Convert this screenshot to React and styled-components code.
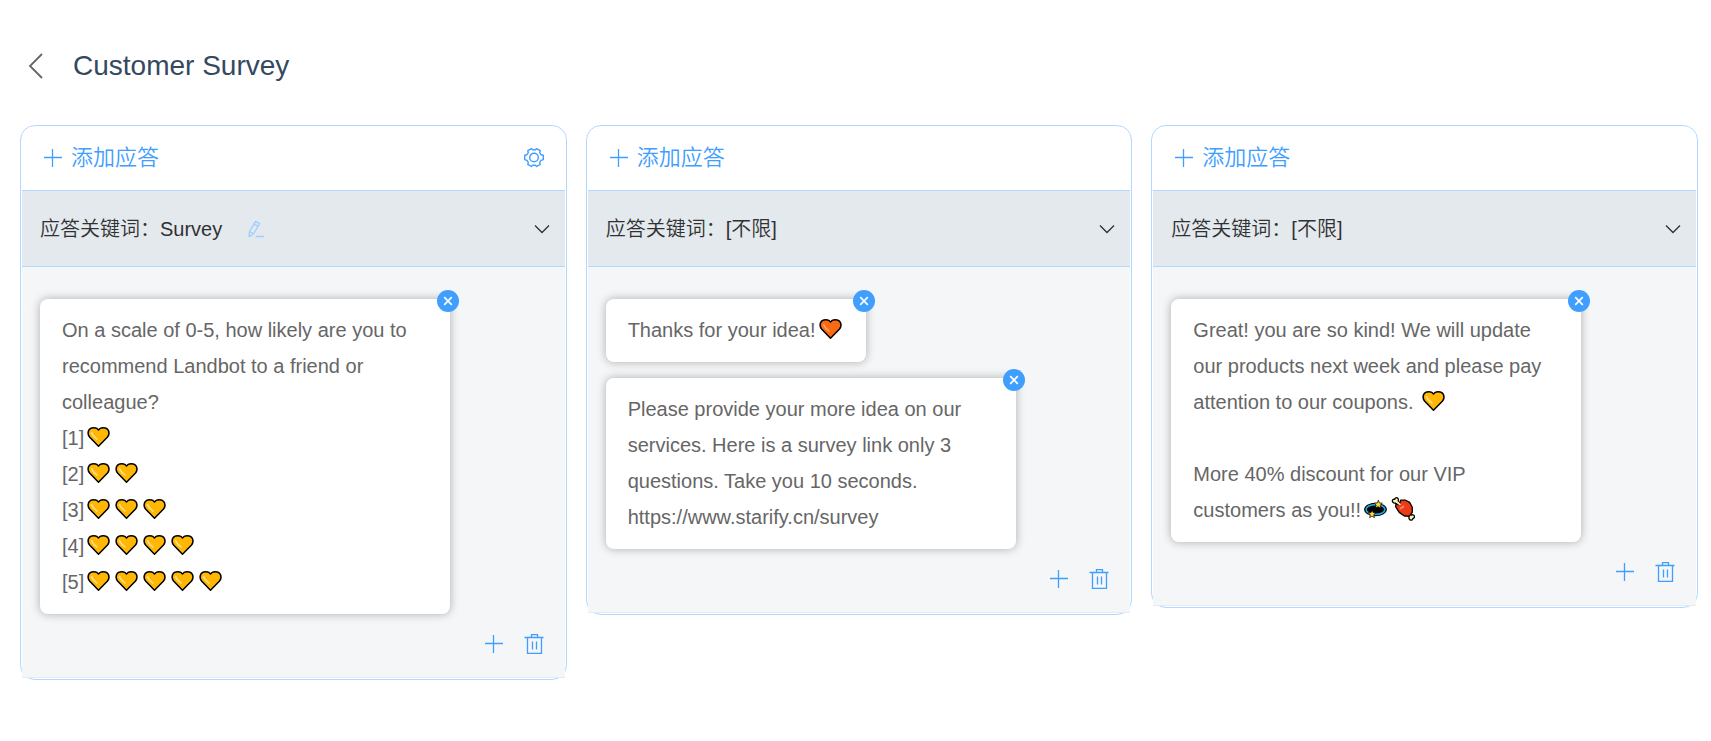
import React from 'react';

import styled, { createGlobalStyle } from 'styled-components';

const colors = {
    blue: '#409eff',
    paleBlue: '#a0cfff',
    line: '#b3d8ff',
    title: '#34495e',
    dark: '#303133',
    text: '#666',
    row: '#e4e9ed',
    body: '#f5f6f8',
    white: '#fff',
};

const GlobalStyle = createGlobalStyle`
  * {
    box-sizing: border-box;
  }
  body {
    margin: 0;
    background-color: ${colors.white};
    font-family: "Liberation Sans", Arial, "Noto Sans CJK SC", sans-serif;
    font-size: 20px;
    color: ${colors.text};
  }
`;

const Root = styled.main`
  padding: 41px 13px 40px 20px;
`;

const PageHeader = styled.header`
  display: flex;
  align-items: center;
  gap: 21px;
  height: 50px;
  margin-bottom: 34px;
`;

const PageTitle = styled.h1`
  margin: 0;
  font-size: 28px;
  font-weight: 400;
  line-height: 36px;
  color: ${colors.title};
`;

const IconButton = styled.button`
  display: flex;
  align-items: center;
  justify-content: center;
  flex: none;
  width: ${({ $width }) => $width || 20}px;
  height: 32px;
  padding: 0;
  border: none;
  background: none;
  color: ${({ $color }) => $color || colors.blue};
  cursor: pointer;
  svg {
    flex: none;
  }
`;

const Columns = styled.div`
  display: grid;
  grid-template-columns: repeat(3, minmax(0, 1fr));
  align-items: start;
  gap: 19px;
`;

const Panel = styled.section`
  padding: 0 1px 1px;
  border: 1px solid ${colors.line};
  border-radius: 15px;
`;

const PanelHeader = styled.div`
  display: flex;
  align-items: center;
  justify-content: space-between;
  height: 65px;
  padding: 0 21px 0 22px;
  border-bottom: 1px solid ${colors.line};
`;

const AddButton = styled.button`
  display: flex;
  align-items: center;
  gap: 9px;
  padding: 0;
  border: none;
  background: none;
  font-family: inherit;
  font-size: 22px;
  font-weight: 350;
  line-height: 32px;
  color: ${colors.blue};
  cursor: pointer;
`;

const KeywordRow = styled.div`
  display: flex;
  align-items: center;
  height: 76px;
  padding: 0 13px 0 18px;
  border-bottom: 1px solid ${colors.line};
  background-color: ${colors.row};
  color: ${colors.dark};
`;

const Keyword = styled.h2`
  margin: 0 24px 0 0;
  font-size: 20px;
  font-weight: 350;
  line-height: 32px;
`;

const Spacer = styled.div`
  flex: 1;
`;

const PanelBody = styled.div`
  padding: 32px 21px 3px 18px;
  border-bottom: 1px solid #e6ebf2;
  background-color: ${colors.body};
`;

const Messages = styled.div`
  display: flex;
  flex-direction: column;
  align-items: flex-start;
  gap: 16px;
`;

const Bubble = styled.article`
  position: relative;
  max-width: 410px;
  padding: 13px 22px 14px;
  border-radius: 8px;
  background-color: ${colors.white};
  box-shadow: 0 0 10px rgba(0, 0, 0, 0.3);
`;

const BubbleText = styled.p`
  margin: 0;
  line-height: 36px;
  white-space: pre-wrap;
`;

const CloseButton = styled.button`
  position: absolute;
  top: -9px;
  right: -9px;
  display: flex;
  align-items: center;
  justify-content: center;
  width: 22px;
  height: 22px;
  padding: 0;
  border: none;
  border-radius: 50%;
  background-color: ${colors.blue};
  color: ${colors.white};
  cursor: pointer;
`;

const Actions = styled.div`
  display: flex;
  align-items: center;
  justify-content: flex-end;
  gap: 20px;
  height: 60px;
`;

const EmojiSvg = styled.svg`
  width: 24px;
  height: 24px;
  margin: 0 2px;
  vertical-align: text-bottom;
`;

const Icon = ({ size = 20, stroke = 1.4, children }) => (
    <svg
        width={size}
        height={size}
        viewBox="0 0 20 20"
        fill="none"
        stroke="currentColor"
        strokeWidth={stroke}
        aria-hidden="true"
    >
        {children}
    </svg>
);

const BackIcon = () => (
    <svg width="16" height="26" viewBox="0 0 16 26" fill="none" stroke="currentColor" strokeWidth="1.8" aria-hidden="true">
        <path d="M14 1 2 13 14 25" />
    </svg>
);

const PlusIcon = () => (
    <svg width="18" height="18" viewBox="0 0 18 18" fill="none" stroke="currentColor" strokeWidth="1.3" aria-hidden="true">
        <path d="M8.5 0v18M0 8.5h18" />
    </svg>
);

const ArrowDownIcon = () => (
    <Icon stroke={1.3}>
        <path d="M3 6.5 10 13.5 17 6.5" />
    </Icon>
);

const GearIcon = () => (
    <Icon>
        <circle cx="10" cy="9.5" r="4.3" />
        <path
            strokeLinejoin="round"
            d="M7.4.6 8.6 1.8h2.8L12.6.6 16.2 2.7 15.7 4.5 17 6.7 19.3 7.3v4.4l-2.3.7-1.3 2.2.5 1.8-3.6 2.1-1.2-1.3H8.6l-1.2 1.3L3.8 16.4l.5-1.8L3 12.4.7 11.7V7.3L3 6.7 4.3 4.5 3.8 2.7Z"
        />
    </Icon>
);

const EditIcon = () => (
    <Icon size={18} stroke={1.5}>
        <path
            strokeLinejoin="round"
            d="M9.6 1.6 14 4.1 7.3 15.3 2.4 18.4 2.7 12.8ZM7.8 4.5 12.3 7.1M2.7 12.8 7.3 15.3M9.5 18.3H19"
        />
    </Icon>
);

const TrashIcon = () => (
    <Icon stroke={1.3}>
        <path d="M.5 3.5h19M3.5 3.5v16h14v-16M7.5 3.5v-3h6v3M8.5 7.5v8M12.5 7.5v8" />
    </Icon>
);

const CloseIcon = () => (
    <svg width="10" height="10" viewBox="0 0 10 10" fill="none" stroke="currentColor" strokeWidth="1.7" aria-hidden="true">
        <path d="M1.2 1.2 8.8 8.8M8.8 1.2 1.2 8.8" />
    </svg>
);

const Heart = ({ fill, shine, label }) => (
    <EmojiSvg viewBox="0 0 24 24" role="img" aria-label={label}>
        <path
            fill={fill}
            stroke="#000"
            strokeWidth="1.5"
            strokeLinejoin="round"
            d="M12.5 5 10.7 3.3C9.4 2.5 6.2 2.4 4.6 3.4 2.7 4.6 2 6.4 2.1 8.4c.1 1.5.6 2.7 1.7 3.9l8.7 8.9 8.8-8.9c1.1-1.2 1.6-2.4 1.7-3.9.1-2-.7-3.8-2.6-5-1.6-1-4.8-.9-6.1-.1Z"
        />
        <path fill="none" stroke={shine} strokeWidth="1.6" strokeLinecap="round" d="M5.8 7.6C5.9 9.7 8.8 12.2 11 14" />
    </EmojiSvg>
);

const Dizzy = () => (
    <EmojiSvg viewBox="0 0 24 24" role="img" aria-label="dizzy">
        <ellipse cx="12.5" cy="12.5" rx="11.4" ry="6.8" fill="#000" />
        <ellipse cx="12.5" cy="12.5" rx="9.4" ry="4.9" fill="none" stroke="#1fa8e0" strokeWidth="1.6" />
        <path
            fill="#ffd83b"
            stroke="#000"
            strokeWidth=".7"
            d="m15.4 3.2 1 2.8 3 .2-2.2 2 .7 3-2.7-1.5-2.7 1.3.7-2.9-2-1.9 3-.2ZM9.2 12.9l.9 2.6 2.8.2-2.1 1.8.6 3.2-2.4-1.6-2.4 1.6.7-3-2.1-2 2.9-.2Z"
        />
    </EmojiSvg>
);

const Meat = () => (
    <EmojiSvg viewBox="0 0 24 24" role="img" aria-label="meat on bone">
        <path
            fill="#ffefb0"
            stroke="#000"
            strokeWidth="1.3"
            strokeLinejoin="round"
            d="M7 8.2 4.7 6.2C2.6 6.3 1 5 1.4 3.4 1.8 2.3 2.9 2 3.7 2.3 4 .8 5.5.3 6.6 1.1 7.6 1.9 7.5 3.2 7 4.2l2.2 2.4ZM16 18l2.1 1.5c-.5 1.8.2 3.3 1.6 3.6 1.3.3 2.2-.6 2.2-1.7 1.3-.2 2-1.3 1.5-2.4-.6-1.3-2.1-1.5-3.3-.9L18.3 16Z"
        />
        <path
            fill="#ee3a17"
            stroke="#000"
            strokeWidth="1.3"
            strokeLinejoin="round"
            d="M9.6 3.2 14.6 3.2 18.6 5.4 21.2 10 21.4 15.2 18.2 19.2 13.4 19 8.2 15.4 4.6 9.6 5 6.8 8.2 7.8Z"
        />
        <path
            fill="#ffefb0"
            d="M5.2 5.2 6.4 4 10.2 7.6 8.4 8.2Z"
        />
        <path fill="none" stroke="#f7856a" strokeWidth="2" strokeLinecap="round" d="M9.5 11.5 12.5 9.5" />
    </EmojiSvg>
);

const emojis = {
    ':yellow:': <Heart fill="#ffb703" shine="#ffdf8c" label="yellow heart" />,
    ':orange:': <Heart fill="#fa6a12" shine="#ffa36b" label="orange heart" />,
    ':dizzy:': <Dizzy />,
    ':meat:': <Meat />,
};

const renderText = text => text.split(/(:[a-z]+:)/).map((part, i) => (
    <React.Fragment key={i}>{emojis[part] || part}</React.Fragment>
));

const scale = [1, 2, 3, 4, 5].map(n => `[${n}]${':yellow:'.repeat(n)}`).join('\n');

const columns = [
    {
        id: 'survey',
        keyword: 'Survey',
        editable: true,
        messages: [
            `On a scale of 0-5, how likely are you to recommend Landbot to a friend or colleague?\n${scale}`,
        ],
    },
    {
        id: 'idea',
        keyword: '[不限]',
        messages: [
            'Thanks for your idea!:orange:',
            'Please provide your more idea on our services. Here is a survey link only 3 questions. Take you 10 seconds.\nhttps://www.starify.cn/survey',
        ],
    },
    {
        id: 'coupon',
        keyword: '[不限]',
        messages: [
            'Great! you are so kind! We will update our products next week and please pay attention to our coupons. :yellow:\n\nMore 40% discount for our VIP customers as you!!:dizzy::meat:',
        ],
    },
];

const Column = ({ keyword, editable, messages }) => (
    <Panel>
        <PanelHeader>
            <AddButton type="button">
                <PlusIcon />
                添加应答
            </AddButton>
            {editable && (
                <IconButton type="button" aria-label="Settings">
                    <GearIcon />
                </IconButton>
            )}
        </PanelHeader>
        <KeywordRow>
            <Keyword>应答关键词：{keyword}</Keyword>
            {editable && (
                <IconButton type="button" aria-label="Edit keyword" $color={colors.paleBlue}>
                    <EditIcon />
                </IconButton>
            )}
            <Spacer />
            <IconButton type="button" aria-label="Collapse" $color={colors.dark}>
                <ArrowDownIcon />
            </IconButton>
        </KeywordRow>
        <PanelBody>
            <Messages>
                {messages.map(message => (
                    <Bubble key={message}>
                        <BubbleText>{renderText(message)}</BubbleText>
                        <CloseButton type="button" aria-label="Remove message">
                            <CloseIcon />
                        </CloseButton>
                    </Bubble>
                ))}
            </Messages>
            <Actions>
                <IconButton type="button" aria-label="Add message">
                    <PlusIcon />
                </IconButton>
                <IconButton type="button" aria-label="Delete answer">
                    <TrashIcon />
                </IconButton>
            </Actions>
        </PanelBody>
    </Panel>
);

const App = () => {
    return (
        <>
            <GlobalStyle />
            <Root>
                <PageHeader>
                    <IconButton type="button" aria-label="Back" $width={32} $color={colors.text}>
                        <BackIcon />
                    </IconButton>
                    <PageTitle>Customer Survey</PageTitle>
                </PageHeader>
                <Columns>
                    {columns.map(column => (
                        <Column key={column.id} {...column} />
                    ))}
                </Columns>
            </Root>
        </>
    )
}

export default App;
